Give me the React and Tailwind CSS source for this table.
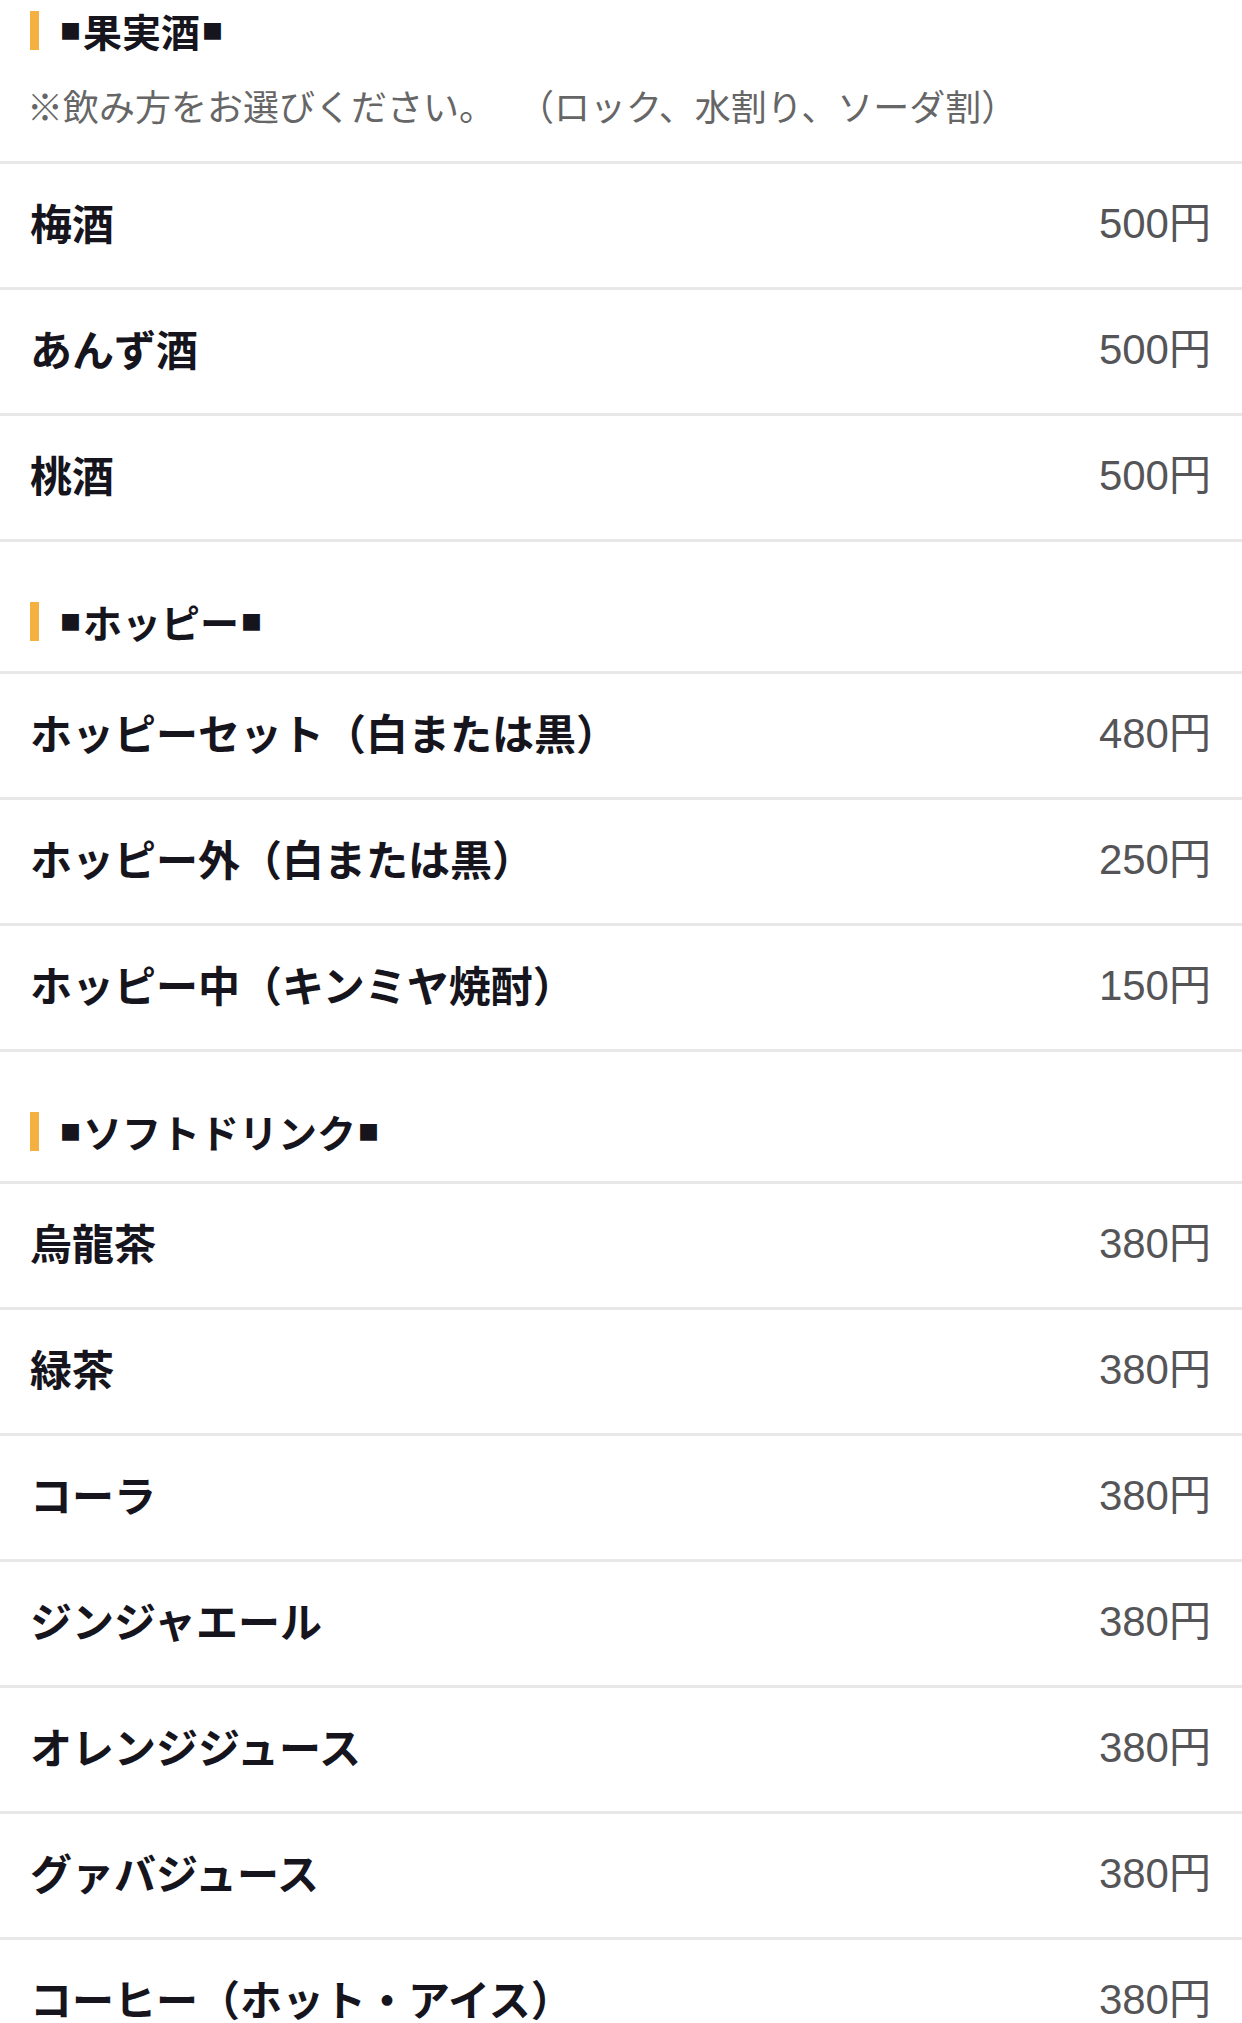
const sections = [
  {
    title: '果実酒',
    note: ['※飲み方をお選びください。', '（ロック、水割り、ソーダ割）'],
    first: true,
    items: [
      { name: '梅酒', price: '500' },
      { name: 'あんず酒', price: '500' },
      { name: '桃酒', price: '500' },
    ],
  },
  {
    title: 'ホッピー',
    items: [
      { name: 'ホッピーセット（白または黒）', price: '480' },
      { name: 'ホッピー外（白または黒）', price: '250' },
      { name: 'ホッピー中（キンミヤ焼酎）', price: '150' },
    ],
  },
  {
    title: 'ソフトドリンク',
    items: [
      { name: '烏龍茶', price: '380' },
      { name: '緑茶', price: '380' },
      { name: 'コーラ', price: '380' },
      { name: 'ジンジャエール', price: '380' },
      { name: 'オレンジジュース', price: '380' },
      { name: 'グァバジュース', price: '380' },
      { name: 'コーヒー（ホット・アイス）', price: '380' },
    ],
  },
]

const jp = { fontFamily: '"Noto Sans CJK JP", "Noto Sans", sans-serif' }
const num = { fontFamily: '"Liberation Sans", "Noto Sans CJK JP", sans-serif' }

// section title with the orange bar
const SectionHeader = ({ title, note, first }) => (
  <div className={`border-b-[3px] border-[#e8e8e8] ${first ? 'pt-[11px] pb-[29px]' : 'pt-[60px] pb-[30px]'}`}>
    <div className="flex items-center h-[39px]">
      <div className="ml-[30px] w-[9px] h-[39px] bg-[#f5b042]" />
      <h2 className="ml-[21px] text-[39px] font-bold leading-none text-[#16151d] flex items-center" style={jp}>
        <span className="text-[21px] mr-[2px]">■</span>
        {title}
        <span className="text-[21px] ml-[2px]">■</span>
      </h2>
    </div>
    {note && (
      <p className="mt-[28px] pl-[27px] text-[36px] leading-[54px] text-[#666] flex gap-[23px]" style={jp}>
        <span>{note[0]}</span>
        <span>{note[1]}</span>
      </p>
    )}
  </div>
)

const MenuRow = ({ name, price }) => (
  <div className="h-[126px] border-b-[3px] border-[#e8e8e8] flex items-center justify-between pl-[30px] pr-[31px] pb-[8px]">
    <span className="text-[42px] font-bold text-[#16151d]" style={jp}>{name}</span>
    <span className="text-[42px] text-[#555558]" style={num}>
      {price}
      <span style={jp}>円</span>
    </span>
  </div>
)

export default function App() {
  return (
    <div className="w-[1242px] h-[2023px] overflow-hidden bg-white">
      {sections.map(section => (
        <section key={section.title}>
          <SectionHeader title={section.title} note={section.note} first={section.first} />
          {section.items.map(item => (
            <MenuRow key={item.name} name={item.name} price={item.price} />
          ))}
        </section>
      ))}
    </div>
  )
}
